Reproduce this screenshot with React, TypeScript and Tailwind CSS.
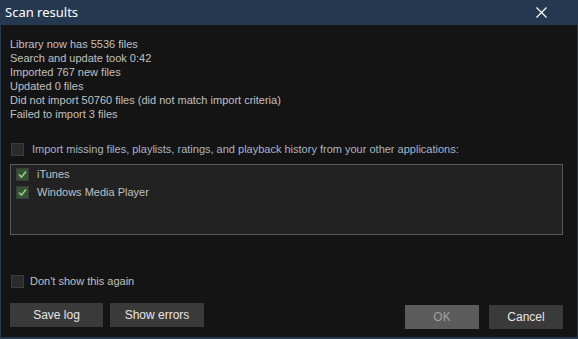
import React from 'react';

const lines = [
  'Library now has 5536 files',
  'Search and update took 0:42',
  'Imported 767 new files',
  'Updated 0 files',
  'Did not import 50760 files (did not match import criteria)',
  'Failed to import 3 files',
];

const Box = ({ checked }: { checked?: boolean }) => (
  <span className="w-[13px] h-[13px] shrink-0 border border-[#3c3c3c] bg-[#2b2b2b] flex items-center justify-center">
    {checked && (
      <span className="w-[11px] h-[11px] bg-[#33552f] flex items-center justify-center">
        <svg width="9" height="9" viewBox="0 0 9 9">
          <path d="M1 4.5 L3.5 7 L8 1.5" stroke="#9cc890" strokeWidth="1.6" fill="none" />
        </svg>
      </span>
    )}
  </span>
);

const Btn = ({ label, disabled }: { label: string; disabled?: boolean }) => (
  <button
    className={
      disabled
        ? 'w-[74px] h-[24px] bg-[#5c5c5c] text-[#a0a0a0] text-[12px]'
        : 'h-[24px] bg-[#3a3a3a] text-[#e6e6e6] text-[12px]'
    }
  >
    {label}
  </button>
);

export default function App() {
  return (
    <div className="w-[578px] h-[339px] bg-[#243850] flex flex-col px-px pb-[2px] font-['Liberation_Sans',Arial,sans-serif]">
      <div className="h-[25px] shrink-0 flex items-center justify-between pl-[4px] pr-[30px]">
        <span className="text-white text-[13px] font-['Noto_Sans',sans-serif]">Scan results</span>
        <svg width="11" height="11" viewBox="0 0 12 12">
          <path d="M0.5 0.5 L11.5 11.5 M11.5 0.5 L0.5 11.5" stroke="#fff" strokeWidth="1.3" />
        </svg>
      </div>
      <div className="flex-1 min-h-0 bg-[#141414] flex flex-col px-[9px] text-[#c0c0c0] text-[11px]">
        <div className="pt-[12px] flex flex-col leading-[14px]">
          {lines.map((l) => (
            <div key={l}>{l}</div>
          ))}
        </div>
        <div className="mt-[22px] flex items-center gap-[8px] pl-[1px] leading-[13px]">
          <Box />
          <span className="text-[#a8b4c4]">
            Import missing files, playlists, ratings, and playback history from your other applications:
          </span>
        </div>
        <div className="mt-[8px] h-[71px] shrink-0 mr-[5px] border border-[#5a5a5a] bg-[#222222] flex flex-col gap-[5px] pt-[3px] pl-[5px]">
          <div className="flex items-center gap-[8px] leading-[13px]">
            <Box checked />
            <span>iTunes</span>
          </div>
          <div className="flex items-center gap-[8px] leading-[13px]">
            <Box checked />
            <span>Windows Media Player</span>
          </div>
        </div>
        <div className="mt-[40px] flex items-center gap-[6px] pl-[1px] leading-[13px]">
          <Box />
          <span>Don't show this again</span>
        </div>
        <div className="mt-[15px] flex items-start">
          <div className="flex gap-[7px]">
            <span className="w-[93px] flex flex-col"><Btn label="Save log" /></span>
            <span className="w-[94px] flex flex-col"><Btn label="Show errors" /></span>
          </div>
          <div className="ml-auto mt-[2px] flex gap-[10px] mr-[5px]">
            <Btn label="OK" disabled />
            <span className="w-[74px] flex flex-col"><Btn label="Cancel" /></span>
          </div>
        </div>
      </div>
    </div>
  );
}
